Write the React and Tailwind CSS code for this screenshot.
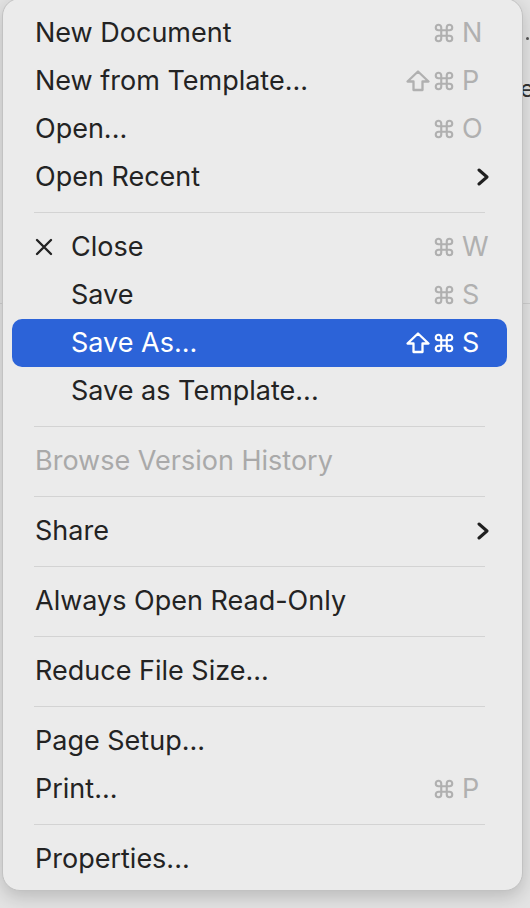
import { Command } from "lucide-react";

const items = [
  { label: "New Document", shift: false, key: "N" },
  { label: "New from Template...", shift: true, key: "P" },
  { label: "Open...", shift: false, key: "O" },
  { label: "Open Recent", submenu: true },
  { sep: true },
  { label: "Close", key: "W", indent: true, mark: true },
  { label: "Save", key: "S", indent: true },
  { label: "Save As...", shift: true, key: "S", indent: true, active: true },
  { label: "Save as Template...", indent: true },
  { sep: true },
  { label: "Browse Version History", disabled: true },
  { sep: true },
  { label: "Share", submenu: true },
  { sep: true },
  { label: "Always Open Read-Only" },
  { sep: true },
  { label: "Reduce File Size..." },
  { sep: true },
  { label: "Page Setup..." },
  { label: "Print...", key: "P" },
  { sep: true },
  { label: "Properties..." },
];

function XMark({ color }) {
  return (
    <svg width="18" height="18" viewBox="0 0 18 18" className="shrink-0">
      <path d="M2 2 L16 16 M16 2 L2 16" stroke={color} strokeWidth="2.4" strokeLinecap="round" />
    </svg>
  );
}

function Shift({ color }) {
  return (
    <svg width="24" height="22" viewBox="0 0 24 22">
      <path
        d="M12 1.5 L22.5 11.5 H16.5 V20 H7.5 V11.5 H1.5 Z"
        fill="none"
        stroke={color}
        strokeWidth="2.3"
        strokeLinejoin="round"
      />
    </svg>
  );
}

function Chevron() {
  return (
    <svg width="14" height="18" viewBox="0 0 14 18">
      <path d="M3 2 L11 9 L3 16" fill="none" stroke="#1f1f1f" strokeWidth="3" strokeLinecap="round" strokeLinejoin="round" />
    </svg>
  );
}

function Row({ item }) {
  const { label, shift, key, indent, mark, active, disabled, submenu } = item;
  const textColor = active ? "text-white" : disabled ? "text-[#a9a9a9]" : "text-[#232323]";
  const keyColor = active ? "text-white" : "text-[#b0b0b0]";
  const keyHex = active ? "#ffffff" : "#b0b0b0";
  return (
    <div
      className={[
        "flex items-center h-12 pl-[23px] pr-[15px] rounded-[10px]",
        active ? "bg-[#2c63d8]" : "",
      ].join(" ")}
    >
      {indent && (
        <div className="w-9 shrink-0 flex items-center">
          {mark && <XMark color={active ? "#fff" : "#232323"} />}
        </div>
      )}
      <div className={"flex-1 " + textColor}>{label}</div>
      {key && (
        <div className={"flex items-center " + keyColor}>
          <div className="w-[70px] flex items-center justify-end gap-[3px]">
            {shift && <Shift color={keyHex} />}
            <Command size={22} strokeWidth={2.3} color={keyHex} />
          </div>
          <span className="w-[30px] ml-[7px]">{key}</span>
        </div>
      )}
      {submenu && (
        <div className="w-[30px] flex justify-end pr-[2px]">
          <Chevron />
        </div>
      )}
    </div>
  );
}

export default function App() {
  return (
    <div className="relative w-[530px] h-[908px] overflow-hidden bg-[#e3e3e3] font-['Inter','Liberation_Sans',sans-serif] text-[27px]">
      {/* faint page behind */}
      <div className="absolute left-0 right-0 top-[303px] h-px bg-[#cfcfcf]" />
      <div className="absolute left-[520px] top-[77px] text-[24px] leading-none text-[#333]">e</div>
      <div className="absolute left-[526px] top-[37px] w-[3px] h-[3px] rounded-full bg-[#555]" />

      <div className="relative ml-[2px] mt-[-2px] w-[521px] h-[893px] rounded-[18px] bg-[#ebebeb] border border-[#c2c2c2] shadow-[0_6px_18px_rgba(0,0,0,0.18)] pl-[9px] pr-[15px] pt-[10px]">
        {items.map((item, i) =>
          item.sep ? (
            <div key={i} className="h-[22px] flex items-center px-[22px]">
              <div className="h-px w-full bg-[#d3d3d3]" />
            </div>
          ) : (
            <Row key={i} item={item} />
          )
        )}
      </div>
    </div>
  );
}
